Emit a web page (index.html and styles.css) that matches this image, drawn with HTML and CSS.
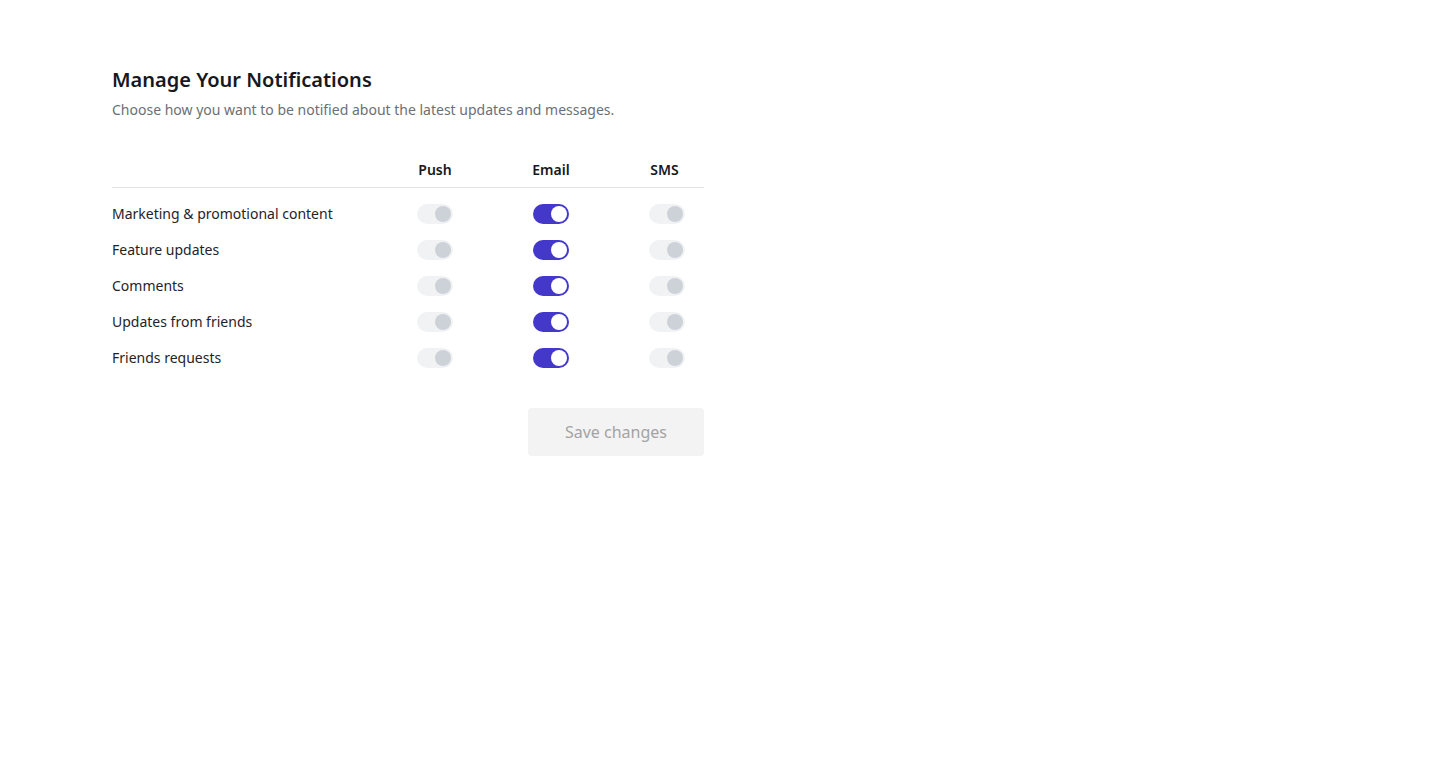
FILE: index.html
```html
<!DOCTYPE html>
<html lang="en">
<head>
<meta charset="utf-8">
<title>Manage Your Notifications</title>
<link rel="stylesheet" href="styles.css">
</head>
<body>
<main class="panel">
  <h1 class="title">Manage Your Notifications</h1>
  <p class="subtitle">Choose how you want to be notified about the latest updates and messages.</p>

  <div class="grid">
    <div class="head-row">
      <div class="label"></div>
      <div class="col-head"><span>Push</span></div>
      <div class="col-head"><span>Email</span></div>
      <div class="col-head col-head-last"><span>SMS</span></div>
    </div>

    <div class="row">
      <div class="label">Marketing &amp; promotional content</div>
      <span class="toggle"></span>
      <span class="toggle on"></span>
      <span class="toggle"></span>
    </div>
    <div class="row">
      <div class="label">Feature updates</div>
      <span class="toggle"></span>
      <span class="toggle on"></span>
      <span class="toggle"></span>
    </div>
    <div class="row">
      <div class="label">Comments</div>
      <span class="toggle"></span>
      <span class="toggle on"></span>
      <span class="toggle"></span>
    </div>
    <div class="row">
      <div class="label">Updates from friends</div>
      <span class="toggle"></span>
      <span class="toggle on"></span>
      <span class="toggle"></span>
    </div>
    <div class="row">
      <div class="label">Friends requests</div>
      <span class="toggle"></span>
      <span class="toggle on"></span>
      <span class="toggle"></span>
    </div>
  </div>

  <div class="actions">
    <button class="save" type="button">Save changes</button>
  </div>
</main>
</body>
</html>
```

FILE: styles.css
```css
* { box-sizing: border-box; }

html, body {
  margin: 0;
  padding: 0;
  background: #ffffff;
}

body {
  font-family: "Noto Sans", "Open Sans", sans-serif;
  color: #1f2328;
}

.panel {
  width: 592px;
  margin-left: 112px;
  padding-top: 66px;
}

.title {
  margin: 0;
  font-size: 20px;
  line-height: 28px;
  font-weight: 600;
  color: #16181d;
}

.subtitle {
  margin: 6px 0 0;
  font-size: 14px;
  line-height: 20px;
  color: #6b6f76;
}

.grid {
  margin-top: 40px;
}

.head-row,
.row {
  display: grid;
  grid-template-columns: 1fr 36px 36px 36px;
  column-gap: 80px;
  padding-right: 19px;
  align-items: center;
}

.head-row {
  height: 28px;
  padding-bottom: 7px;
  border-bottom: 1px solid #e4e4e7;
  margin-bottom: 8px;
  align-items: end;
}

.col-head {
  display: flex;
  justify-content: center;
  font-size: 14px;
  line-height: 20px;
  font-weight: 600;
  color: #16181d;
}

.col-head span { white-space: nowrap; }

.col-head-last span { margin-right: 5px; }

.row {
  height: 36px;
}

.label {
  font-size: 14px;
  line-height: 20px;
  color: #1f2328;
}

.toggle {
  position: relative;
  display: block;
  width: 36px;
  height: 20px;
  border-radius: 10px;
  background: #f1f2f4;
}

.toggle::after {
  content: "";
  position: absolute;
  top: 2px;
  right: 2px;
  width: 16px;
  height: 16px;
  border-radius: 50%;
  background: #cdd1d8;
}

.toggle.on {
  background: #4338ca;
}

.toggle.on::after {
  background: #ffffff;
}

.actions {
  display: flex;
  justify-content: flex-end;
  margin-top: 32px;
}

.save {
  font-family: "Noto Sans", "Open Sans", sans-serif;
  font-size: 16px;
  line-height: 24px;
  padding: 12px 36px;
  width: 176px;
  border: none;
  border-radius: 4px;
  background: #f3f3f3;
  color: #a3a3a3;
}
```
